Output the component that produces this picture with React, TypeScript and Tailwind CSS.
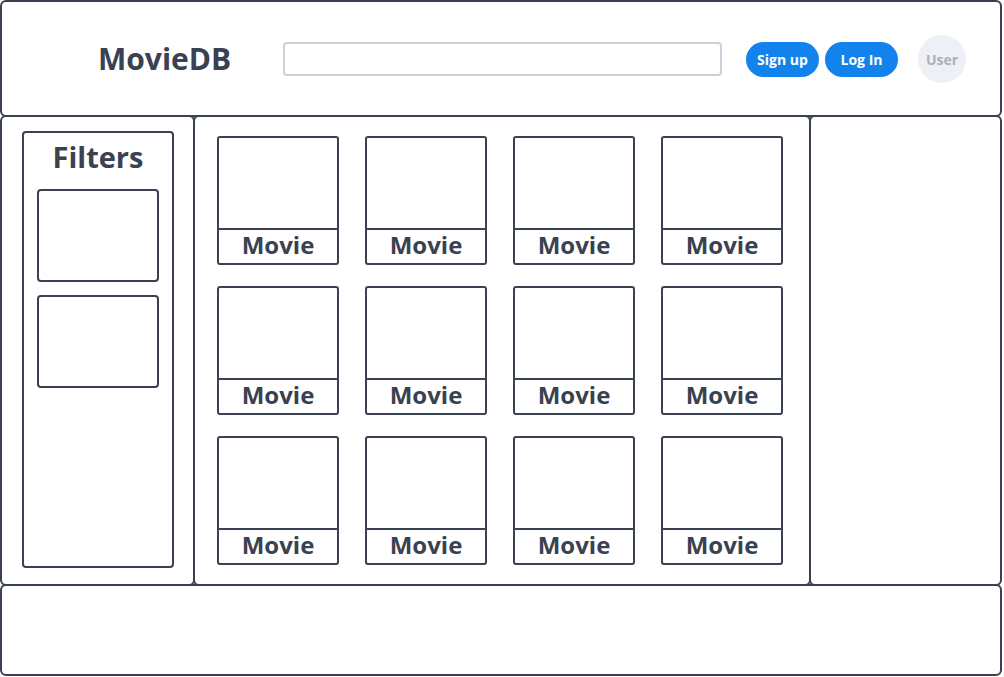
const ink = "border-[#3a4150]";

function MovieCard() {
  return (
    <div className={`flex h-[129px] w-[122px] flex-col rounded-[3px] border-2 ${ink}`}>
      <div className="flex-1" />
      <div className={`flex h-[35px] items-center justify-center border-t-2 ${ink} pb-[4px] text-[24px] font-bold leading-none text-[#3a4150]`}>
        Movie
      </div>
    </div>
  );
}

export default function App() {
  const movies = Array.from({ length: 12 }, (_, i) => i);
  return (
    <div className="h-[677px] w-[1004px] bg-white font-['Open_Sans',sans-serif] text-[#3a4150]">
      <header className={`flex h-[117px] w-[1002px] items-center rounded-md border-2 ${ink} pt-[1px]`}>
        <div className="ml-[96px] w-[185px] text-[30px] font-bold leading-none">MovieDB</div>
        <div className="h-[34px] w-[439px] rounded-[4px] border-2 border-[#c9d3de]" />
        <div className="ml-[24px] flex gap-[6px]">
          <button className="h-[35px] w-[73px] rounded-full bg-[#1283ec] text-[14px] font-bold text-white">Sign up</button>
          <button className="h-[35px] w-[73px] rounded-full bg-[#1283ec] text-[14px] font-bold text-white">Log In</button>
        </div>
        <div className="ml-[20px] flex h-[48px] w-[48px] items-center justify-center rounded-full bg-[#edf0f4] text-[14px] font-bold text-[#a9b1bf]">
          User
        </div>
      </header>

      <div className="-mt-[2px] flex h-[471px] w-[1002px]">
        <aside className={`w-[195px] rounded-md border-2 ${ink} px-[20px] pt-[14px]`}>
          <div className={`flex h-[437px] w-[152px] flex-col items-center rounded-[4px] border-2 ${ink}`}>
            <div className="mt-[9px] text-[29px] font-bold leading-none">Filters</div>
            <div className="mt-[18px] flex flex-col gap-[13px]">
              <div className={`h-[93px] w-[122px] rounded-[4px] border-2 ${ink}`} />
              <div className={`h-[93px] w-[122px] rounded-[4px] border-2 ${ink}`} />
            </div>
          </div>
        </aside>
        <main className={`-ml-[2px] w-[618px] rounded-md border-2 ${ink} pl-[22px] pt-[19px]`}>
          <div className="grid grid-cols-[repeat(4,122px)] gap-x-[26px] gap-y-[21px]">
            {movies.map((m) => (
              <MovieCard key={m} />
            ))}
          </div>
        </main>
        <aside className={`-ml-[2px] flex-1 rounded-md border-2 ${ink}`} />
      </div>

      <footer className={`-mt-[2px] h-[92px] w-[1002px] rounded-md border-2 ${ink}`} />
    </div>
  );
}
